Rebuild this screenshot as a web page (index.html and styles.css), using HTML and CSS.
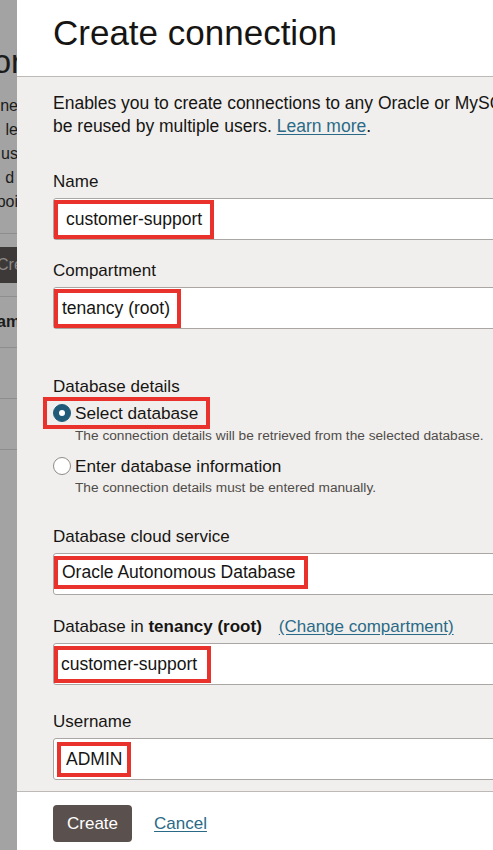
FILE: index.html
```html
<!DOCTYPE html>
<html lang="en">
<head>
<meta charset="utf-8">
<title>Create connection</title>
<link rel="stylesheet" href="styles.css">
</head>
<body>
<div class="app">
  <aside class="strip">
    <div class="s-line s-title"><span>Monitor</span></div>
    <div class="s-lines">
      <div class="s-line"><span class="s-cut1">ne</span></div>
      <div class="s-line"><span class="s-cut1">le</span></div>
      <div class="s-line"><span class="s-cut1">us</span></div>
      <div class="s-line"><span class="s-cut2">d t</span></div>
      <div class="s-line"><span class="s-cut1">poi</span></div>
    </div>
    <div class="s-toolbar"><div class="s-btn">Create</div></div>
    <div class="s-table">
      <div class="s-row s-line"><b class="s-cut3">Name</b></div>
      <div class="s-row"></div>
      <div class="s-row"></div>
    </div>
  </aside>

  <section class="panel">
    <header class="panel-header">
      <h1 class="title">Create connection</h1>
    </header>

    <div class="panel-body">
      <p class="intro">Enables you to create connections to any Oracle or MySQL database. Connections can<br>be reused by multiple users. <a class="link" href="#">Learn more</a>.</p>

      <div class="field field-name">
        <label class="label">Name</label>
        <div class="input"><span class="mark mark-name">customer-support</span></div>
      </div>

      <div class="field field-compartment">
        <label class="label">Compartment</label>
        <div class="input"><span class="mark mark-compartment">tenancy (root)</span></div>
      </div>

      <div class="field field-db">
        <div class="label">Database details</div>
        <div class="radio-row marked">
          <span class="radio radio-on"></span>
          <span>Select database</span>
        </div>
        <div class="helper helper-first">The connection details will be retrieved from the selected database.</div>
        <div class="radio-row radio-second">
          <span class="radio"></span>
          <span>Enter database information</span>
        </div>
        <div class="helper helper-second">The connection details must be entered manually.</div>
      </div>

      <div class="field field-cloud">
        <label class="label">Database cloud service</label>
        <div class="input"><span class="mark mark-cloud">Oracle Autonomous Database</span></div>
      </div>

      <div class="field field-tenancy">
        <label class="label">Database in <b>tenancy (root)</b><a class="link change" href="#">(Change compartment)</a></label>
        <div class="input"><span class="mark mark-tenancy">customer-support</span></div>
      </div>

      <div class="field field-user">
        <label class="label">Username</label>
        <div class="input"><span class="mark mark-user">ADMIN</span></div>
      </div>
    </div>

    <footer class="panel-footer">
      <button class="btn" type="button">Create</button>
      <a class="link cancel" href="#">Cancel</a>
    </footer>
  </section>
</div>
</body>
</html>
```

FILE: styles.css
```css
html, body {
  margin: 0;
  padding: 0;
}
body {
  width: 493px;
  height: 850px;
  overflow: hidden;
  font-family: "Liberation Sans", Arial, Helvetica, sans-serif;
  color: #161513;
  background: #a3a3a3;
}
.app {
  display: flex;
  height: 850px;
}

/* dimmed background page */
.strip {
  flex: none;
  width: 17px;
  height: 850px;
  overflow: hidden;
  background: #a3a3a3;
  color: #1b1b1b;
  display: flex;
  flex-direction: column;
}
.s-line {
  display: flex;
  justify-content: flex-end;
  white-space: nowrap;
}
.s-title {
  margin-top: 42px;
  height: 40px;
  font-size: 33px;
  line-height: 40px;
}
.s-title span { margin-right: -5px; }
.s-lines {
  margin-top: 12px;
  font-size: 16px;
  line-height: 24px;
}
.s-cut1 { margin-right: -1px; }
.s-cut2 { margin-right: -6px; }
.s-cut3 { margin-right: -12px; }
.s-toolbar {
  margin-top: 19px;
  border-top: 1px solid #8e8e8e;
  padding: 13px 0;
}
.s-btn {
  height: 36px;
  line-height: 36px;
  background: #3d3938;
  color: #8e8a88;
  font-size: 16px;
  white-space: nowrap;
  overflow: hidden;
  text-indent: -3px;
}
.s-table {
  border-bottom: 1px solid #8e8e8e;
}
.s-row {
  height: 51px;
  box-sizing: border-box;
  border-top: 1px solid #8e8e8e;
  align-items: center;
  font-size: 16px;
}

/* drawer panel */
.panel {
  flex: none;
  width: 560px;
  height: 850px;
  display: flex;
  flex-direction: column;
  background: #f1efed;
}
.panel-header {
  flex: none;
  height: 77px;
  box-sizing: border-box;
  background: #fff;
  border-bottom: 1px solid #bcb9b6;
  padding: 13px 0 0 36px;
}
.title {
  margin: 0;
  font-size: 35px;
  line-height: 40px;
  font-weight: 400;
  color: #161513;
}
.panel-body {
  flex: 1;
  min-height: 0;
  overflow: hidden;
  padding: 15px 36px 0;
}
.intro {
  margin: 0;
  font-size: 17.5px;
  line-height: 23px;
  white-space: nowrap;
}
.link {
  color: #2a6a87;
  text-decoration: underline;
  text-underline-offset: 2px;
}

.field { display: block; }
.label {
  display: block;
  font-size: 17px;
  line-height: 20px;
  margin-bottom: 6px;
  white-space: nowrap;
}
.label b { font-weight: 700; }
.change { margin-left: 17px; }

.field-name { margin-top: 34px; }
.field-compartment { margin-top: 21px; }
.field-db { margin-top: 48px; }
.field-cloud { margin-top: 30px; }
.field-tenancy { margin-top: 22px; }
.field-user { margin-top: 27px; }

.input {
  height: 42px;
  box-sizing: border-box;
  background: #fff;
  border: 1px solid #a9a6a3;
  border-radius: 3px;
  display: flex;
  align-items: center;
  font-size: 17.5px;
  white-space: nowrap;
}
.mark {
  display: flex;
  align-items: center;
  box-sizing: border-box;
  border: 4px solid #e8322b;
  background: #fff;
}
.mark-name { width: 160px; height: 39px; padding-left: 8px; }
.mark-compartment { width: 127px; height: 39px; padding-left: 4px; }
.mark-cloud { width: 254px; height: 33px; padding-left: 4px; margin-top: -3px; }
.mark-tenancy { width: 157px; height: 37px; padding-left: 3px; margin-top: 1px; }
.mark-user { width: 74px; height: 35px; padding-left: 5px; margin-left: 3px; }

.field-db .label { margin-bottom: 0; }
.radio-row {
  display: flex;
  align-items: center;
  gap: 4px;
  height: 24px;
  font-size: 17.2px;
  white-space: nowrap;
}
.radio-row.marked {
  display: inline-flex;
  box-sizing: border-box;
  height: 32px;
  border: 4px solid #e8322b;
  padding: 0 8px 0 6px;
  margin-left: -10px;
}
.radio {
  flex: none;
  width: 18px;
  height: 18px;
  box-sizing: border-box;
  border-radius: 50%;
  background: #fff;
  border: 1px solid #8f8b88;
  display: flex;
  align-items: center;
  justify-content: center;
}
.radio-on {
  background: #1f5b79;
  border-color: #1f5b79;
}
.radio-on::after {
  content: "";
  width: 6px;
  height: 6px;
  border-radius: 50%;
  background: #fff;
}
.helper {
  font-size: 13.7px;
  line-height: 18px;
  color: #4f4c49;
  padding-left: 22px;
  white-space: nowrap;
}
.helper-first { margin-top: -2px; }
.radio-second { margin-top: 9px; }
.helper-second { margin-top: 1px; }

.panel-footer {
  flex: none;
  height: 59px;
  box-sizing: border-box;
  background: #fff;
  border-top: 1px solid #bcb9b6;
  padding: 13px 36px 0;
  display: flex;
  align-items: flex-start;
  gap: 22px;
}
.btn {
  height: 37px;
  padding: 0 14px;
  border: none;
  border-radius: 4px;
  background: #5a514e;
  color: #fff;
  font-family: inherit;
  font-size: 17px;
  line-height: 37px;
}
.cancel {
  font-size: 17px;
  line-height: 37px;
}
```
